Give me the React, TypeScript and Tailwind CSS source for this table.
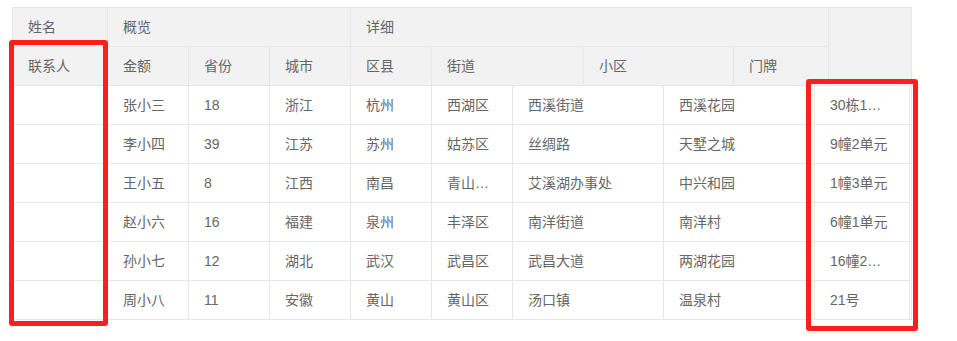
const font = { fontFamily: '"Liberation Sans", "Noto Sans CJK SC", sans-serif' };

const rows = [
  ['', '张小三', '18', '浙江', '杭州', '西湖区', '西溪街道', '西溪花园', '30栋1单元'],
  ['', '李小四', '39', '江苏', '苏州', '姑苏区', '丝绸路', '天墅之城', '9幢2单元'],
  ['', '王小五', '8', '江西', '南昌', '青山湖区', '艾溪湖办事处', '中兴和园', '1幢3单元'],
  ['', '赵小六', '16', '福建', '泉州', '丰泽区', '南洋街道', '南洋村', '6幢1单元'],
  ['', '孙小七', '12', '湖北', '武汉', '武昌区', '武昌大道', '两湖花园', '16幢2单元'],
  ['', '周小八', '11', '安徽', '黄山', '黄山区', '汤口镇', '温泉村', '21号'],
];

const bodyWidths = ['w-[95px]', 'w-[81px]', 'w-[81px]', 'w-[81px]', 'w-[81px]', 'w-[81px]', 'w-[151px]', 'w-[151px]', 'w-[95px]'];

const subHead: [string, string][] = [
  ['联系人', 'w-[95px]'],
  ['金额', 'w-[81px]'],
  ['省份', 'w-[81px]'],
  ['城市', 'w-[81px]'],
  ['区县', 'w-[81px]'],
  ['街道', 'w-[152px]'],
  ['小区', 'w-[150px]'],
  ['门牌', 'w-[95px]'],
];

function Cell({ text, width }: { text: string; width: string }) {
  return (
    <div className={`${width} shrink-0 border-r border-[#e6e6e6] px-[15px] leading-[38px] truncate`}>
      {text}
    </div>
  );
}

export default function App() {
  return (
    <div className="w-[957px] h-[341px] bg-white text-[14px] text-[#666]" style={font}>
      <div className="relative pt-[7px] pl-[12px]">
        <div className="w-[900px] border border-[#e6e6e6]">
          {/* header */}
          <div className="flex bg-[#f2f2f2] border-b border-[#e6e6e6]">
            <div className="w-[816px]">
              <div className="flex h-[39px] border-b border-[#e6e6e6]">
                <Cell text="姓名" width="w-[95px]" />
                <Cell text="概览" width="w-[243px]" />
                <Cell text="详细" width="w-[478px]" />
              </div>
              <div className="flex h-[38px]">
                {subHead.map(([t, w]) => (
                  <Cell key={t} text={t} width={w} />
                ))}
              </div>
            </div>
            <div className="w-[82px] h-[77px]" />
          </div>

          {/* body */}
          <div>
            {rows.map((r, i) => (
              <div
                key={i}
                className={`flex ${i < rows.length - 1 ? 'h-[39px] border-b border-[#e6e6e6]' : 'h-[38px]'} w-[897px]`}
              >
                {r.map((c, j) => (
                  <Cell key={j} text={c} width={bodyWidths[j]} />
                ))}
              </div>
            ))}
          </div>
        </div>

        {/* annotations */}
        <div className="absolute left-[9px] top-[40px] w-[99px] h-[286px] border-[5px] border-[#ff1e1e] rounded-[3px]" />
        <div className="absolute left-[806px] top-[79px] w-[112px] h-[252px] border-[5px] border-[#ff1e1e] rounded-[3px]" />
      </div>
    </div>
  );
}
